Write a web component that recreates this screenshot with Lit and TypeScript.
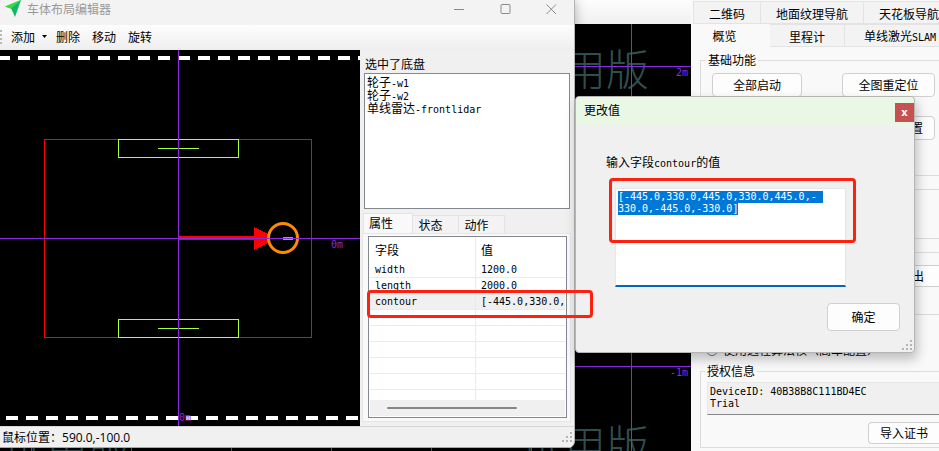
import { LitElement, html, svg, css } from "lit";
import { customElement, property } from "lit/decorators.js";

const shared = css`
  *, *::before, *::after { box-sizing: border-box; }
  :host {
    font: 12px/14px "Noto Sans CJK SC", "Open Sans", sans-serif;
    color: #000;
  }
  .m { font-family: "DejaVu Sans Mono", monospace; font-size: 10px; }
  button {
    font: inherit;
    color: inherit;
    padding: 0;
    border: 0;
    background: none;
    white-space: nowrap;
  }
  .push {
    height: 24px;
    background: #fdfdfd;
    border: 1px solid #d0d0d0;
    border-radius: 4px;
  }
  .tab {
    background: #f3f3f3;
    border: 1px solid #e3e3e3;
    border-left-width: 0;
  }
  .tab:first-child { border-left-width: 1px; }
  .grip { fill: #b4b4b4; display: block; }
`;

const sizeGrip = html`
  <svg class="grip" width="10" height="10" viewBox="0 0 10 10" aria-hidden="true">
    <path d="M8 0h2v2h-2zM4 4h2v2h-2zM8 4h2v2h-2zM0 8h2v2h-2zM4 8h2v2h-2zM8 8h2v2h-2z" />
  </svg>
`;

@customElement("map-view")
class MapView extends LitElement {
  static styles = [shared, css`
    :host { display: block; min-height: 0; background: #000; overflow: hidden; }
    svg { display: block; width: 100%; height: 100%; }
    .grid { stroke: #8a2be2; stroke-width: 1; shape-rendering: crispEdges; }
    .scale { fill: #8a2be2; font: 10px "DejaVu Sans Mono", monospace; }
    .mark { fill: #2f4f4f; font: 300 43px "Noto Sans CJK SC", sans-serif; }
  `];

  render() {
    const columns = [31, 131, 231, 331, 431, 531, 631];
    const rows = [42, 142, 242, 342];
    return html`
      <svg viewBox="0 0 691 427" preserveAspectRatio="xMaxYMin slice">
        <text class="mark" x="520" y="62">试用版</text>
        <text class="mark" x="2" y="438">试用版</text>
        <text class="mark" x="520" y="438">试用版</text>
        <g class="grid">
          ${columns.map((x) => svg`<line x1=${x + 0.5} x2=${x + 0.5} y1="0" y2="427" />`)}
          ${rows.map((y) => svg`<line x1="0" x2="691" y1=${y + 0.5} y2=${y + 0.5} />`)}
        </g>
        <text class="scale" x="688" y="52" text-anchor="end">2m</text>
        <text class="scale" x="688" y="352" text-anchor="end">-1m</text>
      </svg>
    `;
  }
}

@customElement("control-panel")
class ControlPanel extends LitElement {
  static styles = [shared, css`
    :host {
      display: flex;
      flex-direction: column;
      background: #f9f9f9;
      overflow: hidden;
    }
    .tabs { display: flex; flex: none; height: 23px; }
    .upper { padding-left: 2px; margin-top: 1px; }
    .tab { flex: none; padding: 3px 15px 0; }
    .wide { padding: 2px 19px 0; }
    .on { width: 79px; background: #f9f9f9; border-color: #f9f9f9; padding: 0 27px 0 15px; }
    .body { padding-left: 9px; margin-top: 6px; }
    fieldset {
      margin: 0;
      min-width: 0;
      padding: 6px 4px 0 11px;
      border: 1px solid #dcdcdc;
      border-right: 0;
    }
    legend { margin-left: -6px; padding: 0 2px; line-height: 14px; }
    .basic { height: 123px; }
    .row { display: flex; justify-content: space-between; margin-bottom: 19px; }
    .start { width: 90px; }
    .locate { width: 93px; }
    .row.end { justify-content: flex-end; }
    .row .reset { text-align: right; padding-right: 11px; }
    .plain { height: 50px; margin-top: 13px; }
    .export { height: 63px; margin-top: 13px; padding: 12px 0 0; }
    .export .push { display: block; height: 22px; margin-left: auto; width: 93px; padding-left: 53px; border-radius: 0; border-right: 0; text-align: left; }
    .remote { display: flex; align-items: center; gap: 5px; height: 14px; margin: 28px 0 7px 6px; }
    .remote input { margin: 0; width: 12px; height: 12px; }
    .license { height: 84px; padding: 4px 0 0 6px; }
    .license legend { margin-left: -2px; }
    .info {
      display: block;
      width: 100%;
      height: 33px;
      padding: 3px 2px;
      border: 1px solid #e8e8e8;
      border-bottom-color: #868686;
      border-right: 0;
      background: #f0f0f0;
      font: 10px/12px "DejaVu Sans Mono", monospace;
      color: #000;
      resize: none;
      outline: 0;
      overflow: hidden;
    }
    .license .push { display: block; width: 71px; height: 22px; margin: 7px 0 0 auto; border-right: 0; border-radius: 4px 0 0 4px; }
  `];

  render() {
    return html`
      <div class="tabs upper" role="tablist">
        <button class="tab" role="tab">二维码</button>
        <button class="tab" role="tab">地面纹理导航</button>
        <button class="tab" role="tab">天花板导航</button>
      </div>
      <div class="tabs" role="tablist">
        <button class="tab on" role="tab" aria-selected="true">概览</button>
        <button class="tab wide" role="tab">里程计</button>
        <button class="tab wide" role="tab">单线激光<span class="m">SLAM</span></button>
      </div>
      <div class="body">
        <fieldset class="basic">
          <legend>基础功能</legend>
          <div class="row">
            <button class="push start">全部启动</button>
            <button class="push locate">全图重定位</button>
          </div>
          <div class="row end"><button class="push locate reset">初始位置</button></div>
        </fieldset>
        <fieldset class="plain"></fieldset>
        <fieldset class="export"><button class="push">导出</button></fieldset>
        <label class="remote"><input type="radio" name="core" />使用远程算法核（高车配置）</label>
        <fieldset class="license">
          <legend>授权信息</legend>
          <textarea class="info" readonly aria-label="授权信息" .value=${"DeviceID: 40B38B8C111BD4EC\nTrial"}></textarea>
          <button class="push">导入证书</button>
        </fieldset>
      </div>
    `;
  }
}

@customElement("vehicle-canvas")
class VehicleCanvas extends LitElement {
  static styles = [shared, css`
    :host { display: block; min-width: 0; background: #000; overflow: hidden; }
    svg { display: block; width: 100%; height: 100%; }
    .crisp { shape-rendering: crispEdges; fill: none; }
    .belt { stroke: #fff; stroke-width: 4; stroke-dasharray: 12 8; }
    .hull { stroke: #f00; }
    .wheel { stroke: #adff2f; }
    .axis { stroke: #8a2be2; }
    .heading { fill: #f00; shape-rendering: crispEdges; }
    .lidar { fill: none; stroke: #ff8c00; stroke-width: 3; }
    .scale { fill: #8a2be2; font: 10px "DejaVu Sans Mono", monospace; }
  `];

  render() {
    return html`
      <svg viewBox="0 0 360 376" preserveAspectRatio="xMinYMin slice">
        <g class="crisp">
          <path class="belt" d="M-2 8H360" />
          <path class="belt" d="M6 368H360" />
          <rect class="hull" x="44.5" y="89.5" width="267" height="198" />
          ${[89.5, 269.5].map((y) => svg`
            <g class="wheel">
              <rect x="118.5" y=${y} width="120" height="18" />
              <line x1="158" x2="199" y1=${y + 9} y2=${y + 9} />
            </g>`)}
        </g>
        <path class="heading" d="M179 186H254V177L277 188.5L254 200V190H179Z" />
        <circle cx="283" cy="188" r="14.5" fill="#000" />
        <circle class="lidar" cx="283" cy="188" r="14.5" />
        <path class="lidar crisp" d="M283 188.5H293" />
        <path class="axis crisp" d="M178.5 0V376M0 188.5H360" />
        <text class="scale" x="331" y="198">0m</text>
        <text class="scale" x="179" y="371">0m</text>
      </svg>
    `;
  }
}

@customElement("layout-editor")
class LayoutEditor extends LitElement {
  static styles = [shared, css`
    :host {
      display: flex;
      flex-direction: column;
      background: #f0f0f0;
      border-right: 1px solid #b4b4b4;
      border-radius: 0 0 7px 0;
      overflow: hidden;
      box-shadow: 0 0 12px rgba(0, 0, 0, 0.3);
    }
    .title {
      display: flex;
      flex: none;
      align-items: flex-start;
      height: 25px;
      padding-left: 5px;
      background: #f3f3f3;
      color: #999;
    }
    .logo { flex: none; margin-right: 6px; }
    .name { flex: 1; padding-top: 2px; }
    .title button { flex: none; width: 46px; height: 18px; }
    .title button svg { display: block; margin: 0 auto; fill: none; stroke: #8a8a8a; }
    .toolbar {
      display: flex;
      flex: none;
      align-items: center;
      height: 25px;
      padding-bottom: 2px;
      gap: 12px;
      background: linear-gradient(#fdfdfd, #eeeeee);
    }
    .handle { width: 2px; height: 14px; margin-right: -3px; background: repeating-linear-gradient(#b8b8b8 0 2px, transparent 2px 4px); }
    .drop { display: flex; align-items: center; gap: 7px; margin-right: -3px; }
    .work { display: flex; flex: 1; min-height: 0; }
    vehicle-canvas { flex: 1; }
    .side { display: flex; flex-direction: column; flex: none; width: 214px; padding: 7px 3px 4px 2px; }
    .caption { padding: 0 3px; }
    .list {
      flex: none;
      height: 136px;
      margin: 2px 1px 4px 2px;
      padding: 1px 2px;
      border: 1px solid #828790;
      background: #fff;
      list-style: none;
      line-height: 13px;
    }
    .list li { height: 13px; }
    .tabs { display: flex; flex: none; align-items: flex-end; height: 20px; margin-left: 1px; }
    .tab { width: 46px; height: 18px; padding-right: 10px; border-bottom: 0; }
    .tab.on { width: 50px; height: 20px; padding: 0 14px 2px 0; background: #f9f9f9; }
    .page { display: flex; flex: 1; min-height: 0; padding: 2px 3px 3px 5px; background: #f9f9f9; border: 1px solid #e6e6e6; }
    .grid { display: flex; flex-direction: column; flex: 1; min-width: 0; border: 1px solid #828790; background: #fff; padding: 0 1px 1px; }
    .rows { flex: 1; min-height: 0; overflow: hidden; }
    table { width: 100%; border-collapse: separate; border-spacing: 0; table-layout: fixed; }
    th, td { padding: 0 0 0 5px; text-align: left; font-weight: 400; border-right: 1px solid #ebebeb; white-space: nowrap; overflow: hidden; }
    th:last-child, td:last-child { border-right: 0; }
    th { height: 25px; }
    .key { width: 106px; }
    td { height: 16px; line-height: 14px; border-bottom: 1px solid #ebebeb; }
    .picked td { background: #f0f0f0; }
    .bar { flex: none; height: 16px; padding: 7px 48px 0 17px; background: #f0f0f0; }
    .thumb { height: 2px; border-radius: 1px; background: #868686; }
    .status {
      display: flex;
      flex: none;
      align-items: center;
      justify-content: space-between;
      height: 22px;
      padding: 0 2px;
      border-top: 1px solid #d7d7d7;
      border-bottom: 1px solid #a8a8a8;
    }
    .figures { font-family: "Open Sans", sans-serif; }
  `];

  @property({ attribute: false }) fields: string[][] = [
    ["width", "1200.0"],
    ["length", "2000.0"],
    ["contour", "[-445.0,330.0,"],
    ["", ""], ["", ""], ["", ""], ["", ""], ["", ""], ["", ""],
  ];

  render() {
    return html`
      <header class="title">
        <svg class="logo" width="16" height="17" viewBox="0 0 16 17" aria-hidden="true">
          <path d="M16 0L0 6.500L8 9.500Z" fill="#35d04a" />
          <path d="M16 0L6 8L10 17Z" fill="#12b56c" />
          <path d="M16 0L0 6.500L6 8.500Z" fill="#3bdc3a" />
        </svg>
        <span class="name">车体布局编辑器</span>
        <button aria-label="最小化"><svg width="11" height="18" viewBox="0 0 11 18"><path d="M0 9.500H10" /></svg></button>
        <button aria-label="最大化"><svg width="11" height="18" viewBox="0 0 11 18"><rect x="1" y="4.500" width="9" height="9" rx="1" /></svg></button>
        <button aria-label="关闭"><svg width="11" height="18" viewBox="0 0 11 18"><path d="M.5 4.500L10 14M10 4.500L.5 14" /></svg></button>
      </header>
      <nav class="toolbar">
        <span class="handle"></span>
        <button class="drop">添加
          <svg width="5" height="3" viewBox="0 0 5 3" aria-hidden="true"><path d="M0 0H5L2.500 3Z" /></svg>
        </button>
        <button>删除</button>
        <button>移动</button>
        <button>旋转</button>
      </nav>
      <div class="work">
        <vehicle-canvas></vehicle-canvas>
        <section class="side">
          <div class="caption">选中了底盘</div>
          <ul class="list">
            <li>轮子<span class="m">-w1</span></li>
            <li>轮子<span class="m">-w2</span></li>
            <li>单线雷达<span class="m">-frontlidar</span></li>
          </ul>
          <div class="tabs" role="tablist">
            <button class="tab on" role="tab" aria-selected="true">属性</button>
            <button class="tab" role="tab">状态</button>
            <button class="tab" role="tab">动作</button>
          </div>
          <div class="page">
            <div class="grid">
              <div class="rows">
                <table>
                  <thead><tr><th class="key">字段</th><th>值</th></tr></thead>
                  <tbody>
                    ${this.fields.map(([key, value]) => html`
                      <tr class=${key === "contour" ? "picked" : ""}>
                        <td class="m">${key}</td><td class="m">${value}</td>
                      </tr>`)}
                  </tbody>
                </table>
              </div>
              <div class="bar"><div class="thumb"></div></div>
            </div>
          </div>
        </section>
      </div>
      <footer class="status">
        <span>鼠标位置：<span class="figures">590.0,-100.0</span></span>
        ${sizeGrip}
      </footer>
    `;
  }
}

@customElement("value-dialog")
class ValueDialog extends LitElement {
  static styles = [shared, css`
    :host {
      display: flex;
      flex-direction: column;
      background: #f0f0f0;
      border: 1px solid #b4b4b4;
      border-radius: 4px;
      box-shadow: 2px 6px 12px rgba(0, 0, 0, 0.25);
    }
    .title {
      display: flex;
      justify-content: space-between;
      align-items: flex-start;
      height: 29px;
      padding: 6px 0 0 8px;
      border-radius: 4px 4px 0 0;
      background: #ebf7e5;
    }
    .close { width: 19px; height: 19px; background: #c75050; color: #fff; font: 700 10px/18px "DejaVu Sans", sans-serif; }
    .form { display: flex; flex-direction: column; flex: 1; padding: 29px 14px 21px 30px; }
    .field { position: relative; margin: 17px 54px 16px 9px; }
    textarea {
      display: block;
      width: 100%;
      height: 99px;
      padding: 2px 26px 0 2px;
      border: 1px solid #e6e6e6;
      border-bottom: 2px solid #0067c0;
      background: #fff;
      color: #000;
      font: 10px/12px "DejaVu Sans Mono", monospace;
      word-break: break-all;
      resize: none;
      outline: 0;
      overflow: hidden;
    }
    textarea::selection { background: #0078d7; color: #fff; }
    .callout { position: absolute; inset: -10px -10px 44px -6px; border: 3px solid #ff2010; border-radius: 4px; pointer-events: none; }
    .ok { width: 73px; height: 28px; align-self: flex-end; }
    .corner { position: absolute; right: 2px; bottom: 2px; }
  `];

  firstUpdated() {
    const box = this.renderRoot.querySelector("textarea")!;
    box.focus();
    box.select();
  }

  render() {
    return html`
      <header class="title">
        <span>更改值</span>
        <button class="close" aria-label="关闭">x</button>
      </header>
      <div class="form">
        <label for="value">输入字段<span class="m">contour</span>的值</label>
        <div class="field">
          <textarea id="value" spellcheck="false" .value=${"[-445.0,330.0,445.0,330.0,445.0,-330.0,-445.0,-330.0]"}></textarea>
          <div class="callout"></div>
        </div>
        <button class="push ok">确定</button>
      </div>
      <div class="corner">${sizeGrip}</div>
    `;
  }
}

@customElement("app-root")
class AppRoot extends LitElement {
  static styles = [shared, css`
    :host {
      position: relative;
      display: grid;
      grid-template-columns: minmax(0, 1fr) 248px;
      height: 100vh;
      overflow: hidden;
    }
    .main { display: flex; flex-direction: column; min-height: 0; }
    .strip { flex: none; height: 24px; background: linear-gradient(#fdfdfd, #f0f0f0); }
    map-view { flex: 1; }
    layout-editor { position: absolute; inset: 0 364px 3px 0; }
    value-dialog { position: absolute; top: 96px; right: 24px; width: 340px; }
    .callout { position: absolute; top: 290px; right: 346px; width: 226px; height: 28px; border: 3px solid #ff2010; border-radius: 4px; pointer-events: none; }
  `];

  render() {
    return html`
      <main class="main">
        <div class="strip"></div>
        <map-view></map-view>
      </main>
      <control-panel></control-panel>
      <layout-editor></layout-editor>
      <value-dialog></value-dialog>
      <div class="callout"></div>
    `;
  }
}
